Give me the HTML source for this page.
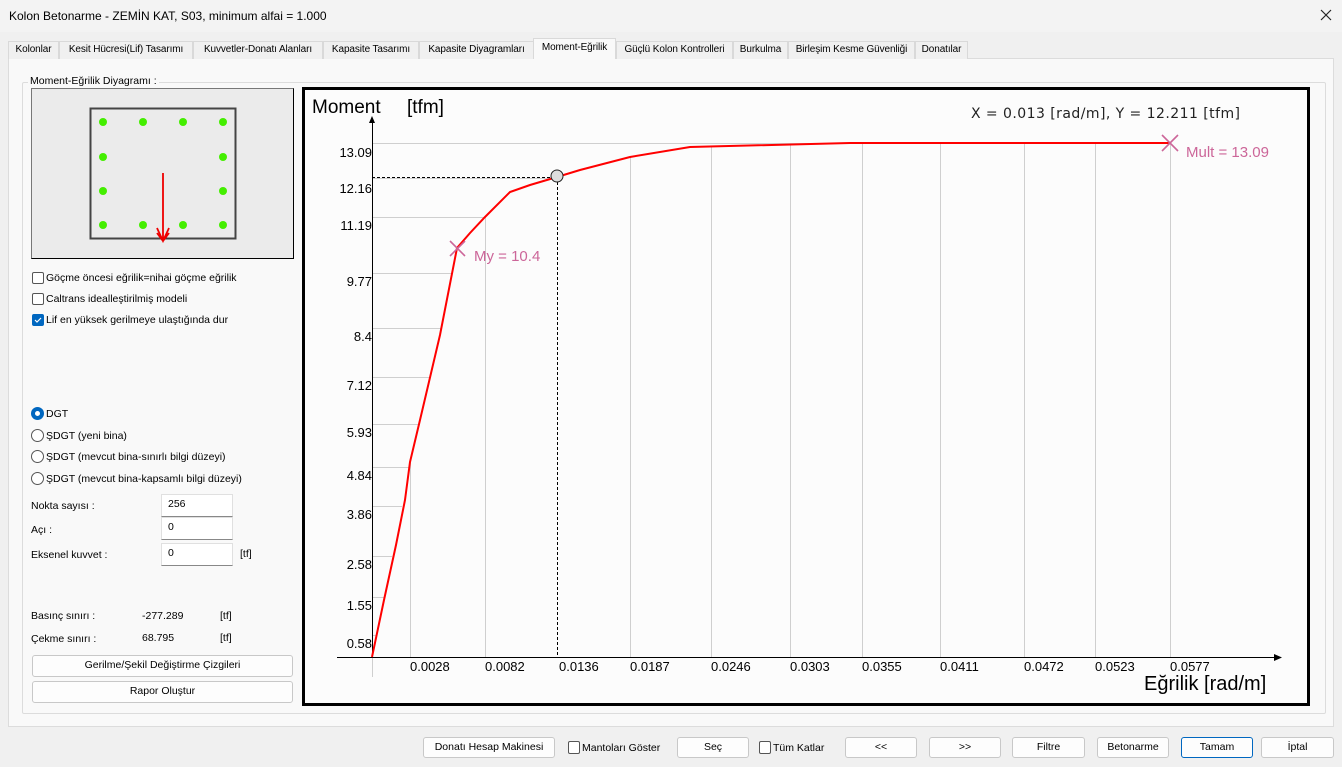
<!DOCTYPE html>
<html><head><meta charset="utf-8"><style>
*{margin:0;padding:0;box-sizing:border-box}
body{width:1342px;height:767px;background:#f0f0f0;font-family:"Liberation Sans",sans-serif;font-size:10.5px;color:#000;position:relative;overflow:hidden}
.a{position:absolute;white-space:nowrap}
.tab{position:absolute;top:41px;height:18px;border:1px solid #d9d9d9;border-bottom:none;background:#f0f0f0;font-size:10px;line-height:16px;text-align:center;white-space:nowrap;overflow:hidden;letter-spacing:-0.1px}
.btn{position:absolute;height:21px;border:1px solid #c8c8c8;border-radius:3px;background:#fdfdfd;text-align:center;line-height:19px;font-size:10.5px}
.cb{position:absolute;width:12px;height:12px;border:1px solid #555;border-radius:2px;background:#fff}
.rb{position:absolute;width:13px;height:13px;border:1px solid #555;border-radius:50%;background:#fff}
.inp{position:absolute;width:72px;height:23px;background:#fff;border:1px solid #e0e0e0;border-bottom:1px solid #888;padding:3px 6px;font-size:10.5px}
</style></head><body>
<div class="a" style="left:0;top:0;width:1342px;height:32px;background:#f3f3f3"></div>
<div class="a" style="left:9px;top:9px;font-size:12px">Kolon Betonarme - ZEMİN KAT, S03, minimum alfai = 1.000</div>
<svg class="a" style="left:1320px;top:9px" width="12" height="12"><path d="M1 1L11 11M11 1L1 11" stroke="#222" stroke-width="1.2"/></svg>
<div class="a" style="left:8px;top:58px;width:1326px;height:669px;background:#f9f9f9;border:1px solid #dcdcdc"></div>
<div class="tab" style="left:8px;width:51px">Kolonlar</div>
<div class="tab" style="left:59px;width:134px">Kesit Hücresi(Lif) Tasarımı</div>
<div class="tab" style="left:193px;width:130px">Kuvvetler-Donatı Alanları</div>
<div class="tab" style="left:323px;width:96px">Kapasite Tasarımı</div>
<div class="tab" style="left:419px;width:115px">Kapasite Diyagramları</div>
<div class="tab" style="left:533px;top:38px;height:21px;width:83px;background:#f9f9f9;line-height:17px">Moment-Eğrilik</div>
<div class="tab" style="left:616px;width:117px">Güçlü Kolon Kontrolleri</div>
<div class="tab" style="left:733px;width:55px">Burkulma</div>
<div class="tab" style="left:788px;width:127px">Birleşim Kesme Güvenliği</div>
<div class="tab" style="left:915px;width:53px">Donatılar</div>

<div class="a" style="left:22px;top:82px;width:1304px;height:632px;border:1px solid #dcdcdc;border-radius:2px"></div>
<div class="a" style="left:28px;top:75px;background:#f9f9f9;padding:0 2px">Moment-Eğrilik Diyagramı :</div>

<div class="a" style="left:31px;top:88px;width:263px;height:171px;background:#ebebeb;border:1px solid #777;border-right-color:#000;border-bottom-color:#000"></div>
<svg class="a" style="left:31px;top:88px" width="263" height="171">
<rect x="59.5" y="20.5" width="145" height="130" fill="none" stroke="#444" stroke-width="2"/>
<g fill="#44ee00"><circle cx="72" cy="34" r="4"/><circle cx="112" cy="34" r="4"/><circle cx="152" cy="34" r="4"/><circle cx="192" cy="34" r="4"/>
<circle cx="72" cy="69" r="4"/><circle cx="192" cy="69" r="4"/><circle cx="72" cy="103" r="4"/><circle cx="192" cy="103" r="4"/>
<circle cx="72" cy="137" r="4"/><circle cx="112" cy="137" r="4"/><circle cx="152" cy="137" r="4"/><circle cx="192" cy="137" r="4"/></g>
<path d="M132 85V153M126 140L132 153L138 140M126 145L132 153L138 145" stroke="#e00" stroke-width="1.8" fill="none"/>
</svg>

<div class="cb" style="left:32px;top:272px"></div><div class="a" style="left:46px;top:272px">Göçme öncesi eğrilik=nihai göçme eğrilik</div>
<div class="cb" style="left:32px;top:293px"></div><div class="a" style="left:46px;top:293px">Caltrans idealleştirilmiş modeli</div>
<div class="cb" style="left:32px;top:314px;background:#0067c0;border-color:#0067c0"><svg width="10" height="10" style="position:absolute;left:0;top:0"><path d="M2 5L4 7L8 3" stroke="#fff" fill="none" stroke-width="1.2"/></svg></div><div class="a" style="left:46px;top:314px">Lif en yüksek gerilmeye ulaştığında dur</div>

<div class="rb" style="left:31px;top:407px;border:4px solid #0067c0"></div><div class="a" style="left:46px;top:408px">DGT</div>
<div class="rb" style="left:31px;top:429px"></div><div class="a" style="left:46px;top:430px">ŞDGT (yeni bina)</div>
<div class="rb" style="left:31px;top:450px"></div><div class="a" style="left:46px;top:451px">ŞDGT (mevcut bina-sınırlı bilgi düzeyi)</div>
<div class="rb" style="left:31px;top:472px"></div><div class="a" style="left:46px;top:473px">ŞDGT (mevcut bina-kapsamlı bilgi düzeyi)</div>

<div class="a" style="left:31px;top:500px">Nokta sayısı :</div><div class="inp" style="left:161px;top:494px">256</div>
<div class="a" style="left:31px;top:524px">Açı :</div><div class="inp" style="left:161px;top:517px">0</div>
<div class="a" style="left:31px;top:549px">Eksenel kuvvet :</div><div class="inp" style="left:161px;top:543px">0</div><div class="a" style="left:240px;top:548px">[tf]</div>

<div class="a" style="left:31px;top:610px">Basınç sınırı :</div><div class="a" style="left:142px;top:610px">-277.289</div><div class="a" style="left:220px;top:610px">[tf]</div>
<div class="a" style="left:31px;top:633px">Çekme sınırı :</div><div class="a" style="left:142px;top:632px">68.795</div><div class="a" style="left:220px;top:632px">[tf]</div>
<div class="btn" style="left:32px;top:655px;width:261px;height:22px">Gerilme/Şekil Değiştirme Çizgileri</div>
<div class="btn" style="left:32px;top:681px;width:261px;height:22px">Rapor Oluştur</div>

<svg class="a" style="left:302px;top:87px" width="1008" height="620" font-family="Liberation Sans, sans-serif">
<rect x="1.5" y="1.5" width="1005" height="616" fill="#fcfcfc" stroke="#000" stroke-width="3"/>
<g transform="translate(-302,-87)">
<g stroke="#cfcfcf" stroke-width="1">
<path d="M372 143.5H1170M372 178.5H557M372 217.5H485M372 273.5H452M372 328.5H441M372 377.5H430M372 424.5H420M372 467.5H410M372 506.5H402M372 556.5H392M372 597.5H384M372 635.5H376"/>
<path d="M410.5 657V462M485.5 657V217M630.5 657V157M711.5 657V147M790.5 657V145M862.5 657V144M940.5 657V143M1024.5 657V143M1095.5 657V143M1170.5 657V143M372.5 657V677"/>
</g>
<path d="M372.5 120V657M337 657.5H1278" stroke="#000" stroke-width="1"/>
<path d="M369 123L372 116L375 123Z" fill="#000"/>
<path d="M1274 654L1282 657.5L1274 661Z" fill="#000"/>
<path d="M372 177.5H557M557.5 177V657" stroke="#000" stroke-dasharray="3,2" stroke-width="1"/>
<polyline points="372,657 384,600 396,545 405,500 410,462 420,420 440,335 457,248 470,233 485,217 510,192 530,185 557,177 580,170 630,157 690,147 850,143 1170,143" fill="none" stroke="#f00" stroke-width="2"/>
<circle cx="557" cy="176" r="6" fill="#ddd" stroke="#222" stroke-width="1"/>
<path d="M450 241L465 256M465 241L450 256M1162 135L1178 151M1178 135L1162 151" stroke="#cc6699" stroke-width="1.6"/>
<text x="474" y="261" font-size="15" fill="#cc6699">My = 10.4</text>
<text x="1186" y="157" font-size="15" fill="#cc6699">Mult = 13.09</text>
<text x="312" y="113" font-size="19">Moment</text><text x="407" y="113" font-size="19">[tfm]</text>
<text x="1144" y="690" font-size="20">Eğrilik [rad/m]</text>
<text x="971" y="118" font-size="14" font-family="DejaVu Sans, sans-serif" fill="#222" textLength="269">X = 0.013 [rad/m],  Y = 12.211 [tfm]</text>
<g font-size="13" text-anchor="end">
<text x="372" y="157">13.09</text><text x="372" y="193">12.16</text><text x="372" y="230">11.19</text><text x="372" y="286">9.77</text><text x="372" y="341">8.4</text><text x="372" y="390">7.12</text><text x="372" y="437">5.93</text><text x="372" y="480">4.84</text><text x="372" y="519">3.86</text><text x="372" y="569">2.58</text><text x="372" y="610">1.55</text><text x="372" y="648">0.58</text>
</g>
<g font-size="13">
<text x="410" y="671">0.0028</text><text x="485" y="671">0.0082</text><text x="559" y="671">0.0136</text><text x="630" y="671">0.0187</text><text x="711" y="671">0.0246</text><text x="790" y="671">0.0303</text><text x="862" y="671">0.0355</text><text x="940" y="671">0.0411</text><text x="1024" y="671">0.0472</text><text x="1095" y="671">0.0523</text><text x="1170" y="671">0.0577</text>
</g>
</g>
</svg>

<div class="btn" style="left:423px;top:737px;width:132px">Donatı Hesap Makinesi</div>
<div class="cb" style="left:568px;top:741px;height:13px"></div><div class="a" style="left:582px;top:742px">Mantoları Göster</div>
<div class="btn" style="left:677px;top:737px;width:72px">Seç</div>
<div class="cb" style="left:759px;top:741px;height:13px"></div><div class="a" style="left:773px;top:742px">Tüm Katlar</div>
<div class="btn" style="left:845px;top:737px;width:72px">&lt;&lt;</div>
<div class="btn" style="left:929px;top:737px;width:72px">&gt;&gt;</div>
<div class="btn" style="left:1012px;top:737px;width:73px">Filtre</div>
<div class="btn" style="left:1097px;top:737px;width:72px">Betonarme</div>
<div class="btn" style="left:1181px;top:737px;width:72px;border-color:#0067c0">Tamam</div>
<div class="btn" style="left:1261px;top:737px;width:73px">İptal</div>
</body></html>
